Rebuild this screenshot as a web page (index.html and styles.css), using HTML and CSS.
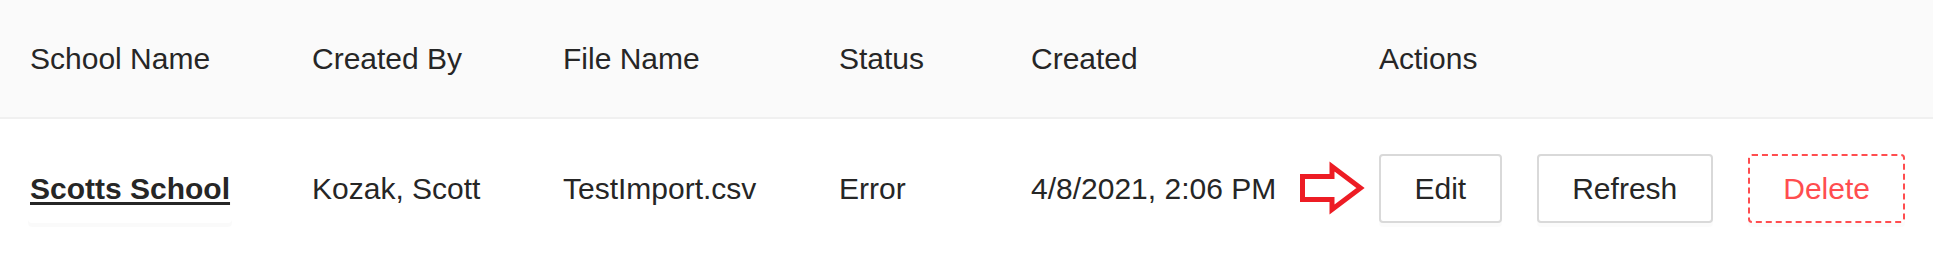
FILE: index.html
```html
<!DOCTYPE html>
<html lang="en">
<head>
    <meta charset="UTF-8">
    <title>Imports</title>
    <link rel="stylesheet" href="styles.css">
</head>
<body>
    <table class="import-table">
        <colgroup>
            <col style="width: 282px">
            <col style="width: 251px">
            <col style="width: 276px">
            <col style="width: 192px">
            <col style="width: 348px">
            <col>
        </colgroup>
        <thead>
            <tr>
                <th>School Name</th>
                <th>Created By</th>
                <th>File Name</th>
                <th>Status</th>
                <th>Created</th>
                <th>Actions</th>
            </tr>
        </thead>
        <tbody>
            <tr>
                <td><button class="btn btn-link">Scotts School</button></td>
                <td>Kozak, Scott</td>
                <td>TestImport.csv</td>
                <td>Error</td>
                <td>4/8/2021, 2:06 PM</td>
                <td>
                    <div class="actions">
                        <svg class="pointer" width="70" height="56" viewBox="0 0 70 56">
                            <polygon points="4.5,15.5 34,15.5 34,5.5 62.5,27 34,48.5 34,38.5 4.5,38.5" fill="none" stroke="#ed1c24" stroke-width="5"/>
                        </svg>
                        <button class="btn">Edit</button>
                        <button class="btn">Refresh</button>
                        <button class="btn btn-danger">Delete</button>
                    </div>
                </td>
            </tr>
        </tbody>
    </table>
</body>
</html>
```

FILE: styles.css
```css
body {
    margin: 0;
    font-family: 'Liberation Sans', Arial, sans-serif;
    background-color: #ffffff;
    color: #262626;
}
.import-table {
    width: 100%;
    border-collapse: collapse;
    table-layout: fixed;
    font-size: 30px;
}
.import-table th {
    background-color: #fafafa;
    font-weight: normal;
    text-align: left;
    line-height: 47px;
    padding: 35px 0 35px 30px;
    border-bottom: 2px solid #f0f0f0;
}
.import-table td {
    line-height: 47px;
    padding: 35px 0 35px 30px;
    vertical-align: middle;
    white-space: nowrap;
}
.actions {
    position: relative;
    display: flex;
    gap: 35px;
}
.pointer {
    position: absolute;
    left: -81px;
    top: 7px;
}
.btn {
    height: 69px;
    padding: 0 33.5px;
    font-family: inherit;
    font-size: 30px;
    color: #262626;
    background-color: #ffffff;
    border: 2px solid #d9d9d9;
    border-radius: 4px;
    box-shadow: 0 4px 0 rgba(0, 0, 0, 0.015);
    cursor: pointer;
}
.btn-danger {
    color: #ff4d4f;
    border: 2px dashed #ff4d4f;
}
.btn-link {
    padding: 0;
    margin-left: -2px;
    border-color: transparent;
    font-weight: bold;
    text-decoration: underline;
    text-decoration-thickness: 3px;
    text-underline-offset: 3px;
    box-shadow: 0 4px 0 rgba(0, 0, 0, 0.02);
}
```
